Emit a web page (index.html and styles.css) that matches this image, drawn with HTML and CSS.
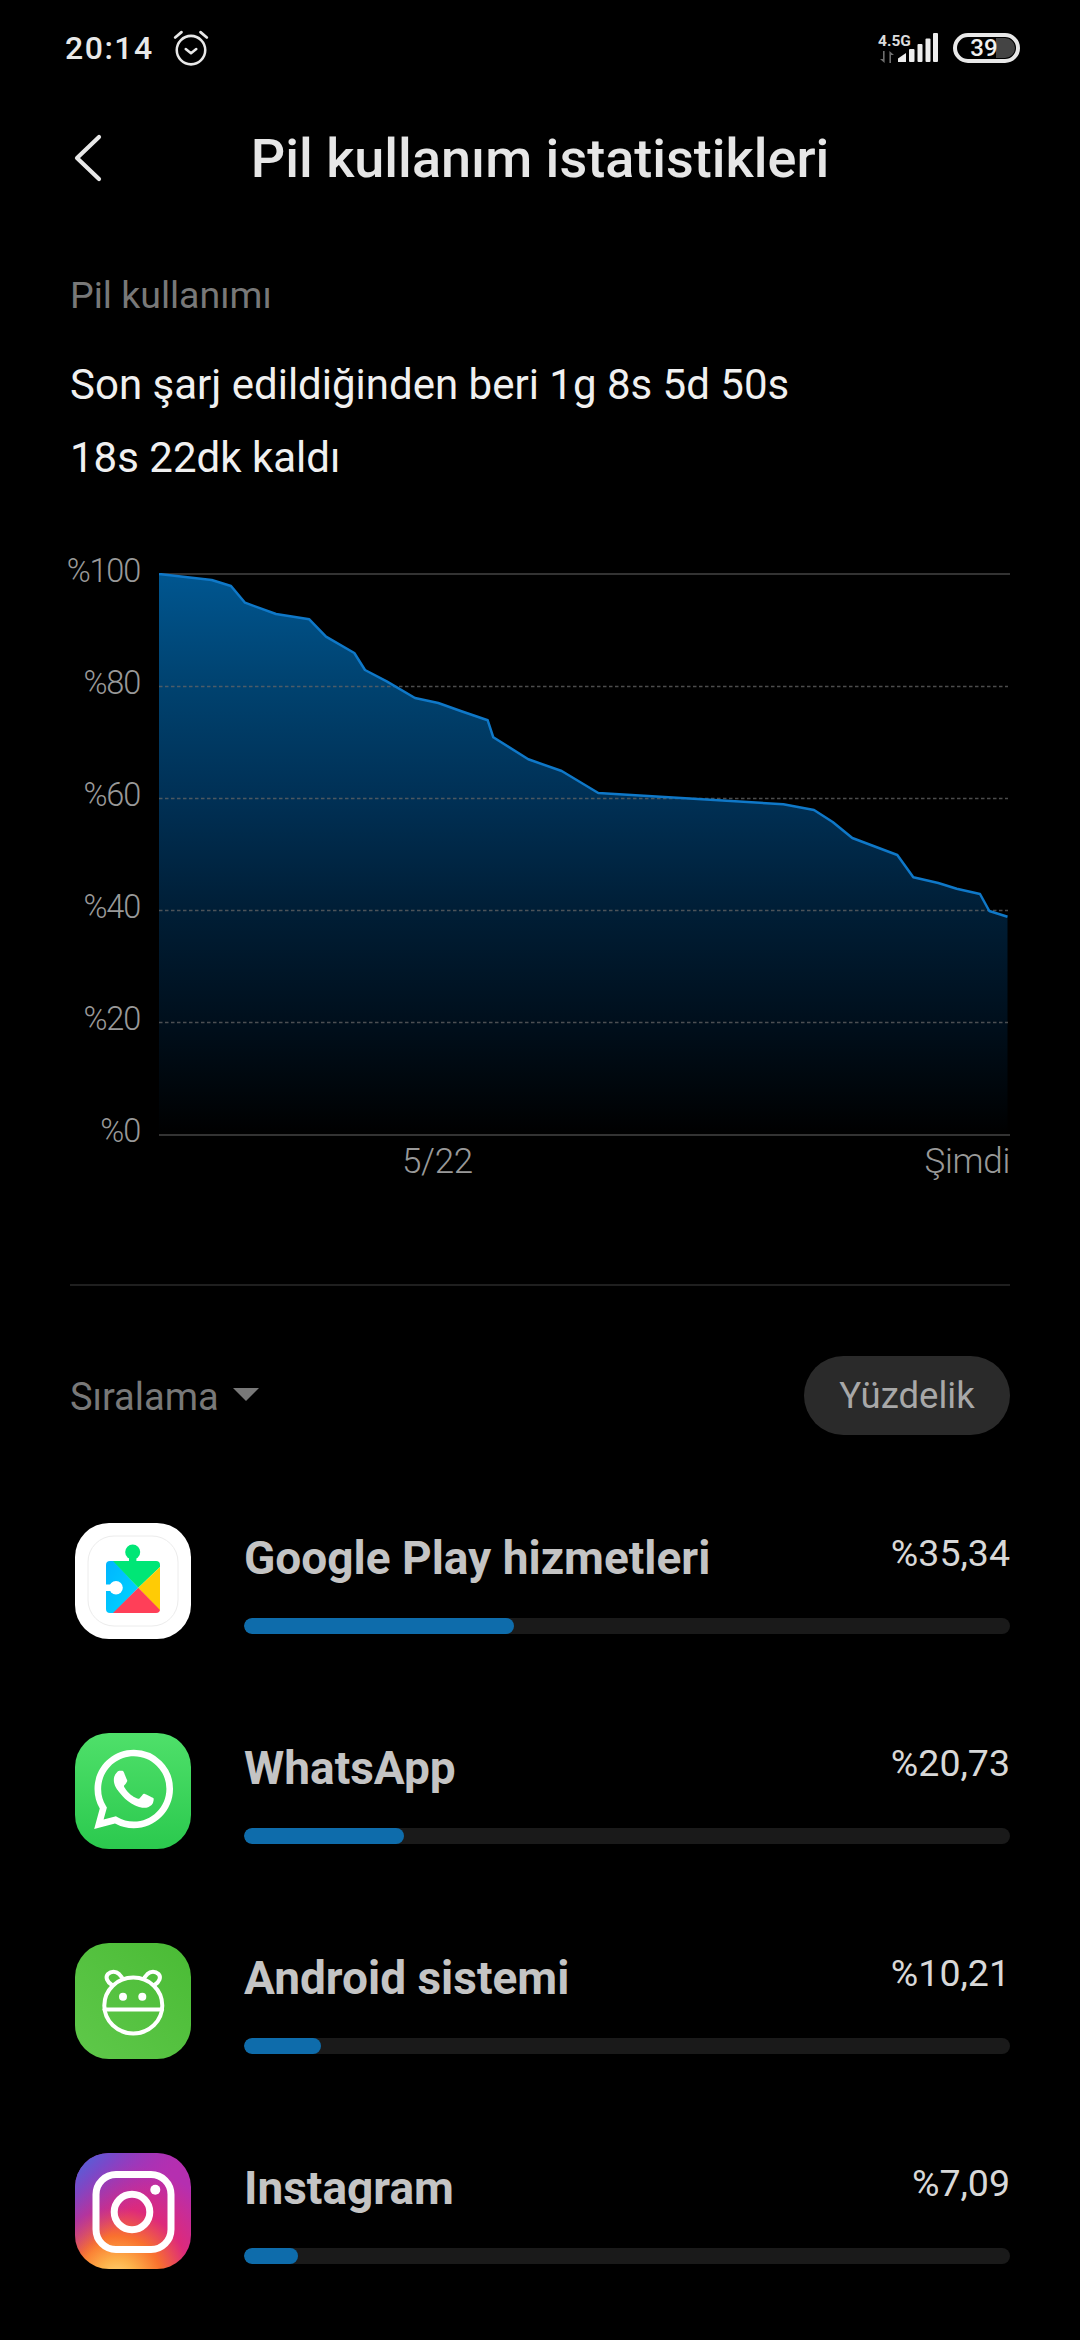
FILE: index.html
```html
<!DOCTYPE html>
<html lang="tr">
<head>
<meta charset="utf-8">
<title>Pil kullanım istatistikleri</title>
<link rel="stylesheet" href="styles.css">
</head>
<body>
<div class="page">
  <div class="statusbar">
    <div class="status-left">
      <span class="time">20:14</span>
      <svg class="alarm" viewBox="0 0 36 36" width="36" height="36" fill="none" stroke="#e8e8e8" stroke-linecap="round" stroke-linejoin="round">
        <circle cx="18" cy="20" r="13.500" stroke-width="2.400"/>
        <path d="M13 19l5 4 5-4" stroke-width="2.400"/>
        <path d="M3 8l6-5M33 8l-6-5" stroke-width="2.600"/>
      </svg>
    </div>
    <div class="status-right">
      <div class="net">
        <span class="net-type">4.5G</span>
        <svg class="net-arrows" viewBox="0 0 14 12" width="14" height="12" fill="#6e6e6e"><path d="M0 8h3V0h1.600v12zM14 4h-3v8H9.400V0z"/></svg>
      </div>
      <svg class="signal" viewBox="0 0 40 30" width="40" height="30" fill="#ececec">
        <path d="M0 29v-3.500l8-5.500v9z"/>
        <rect x="11" y="16" width="5.500" height="13" rx="1"/>
        <rect x="19.500" y="11" width="5" height="18" rx="1"/>
        <rect x="27.500" y="5.500" width="5" height="23.500" rx="1"/>
        <rect x="35" y="0" width="5" height="29" rx="1"/>
      </svg>
      <div class="battery"><span class="battery-level"></span><span class="battery-text">39</span></div>
    </div>
  </div>

  <header class="topbar">
    <svg class="back" viewBox="0 0 30 48" width="30" height="48" fill="none" stroke="#e8e8e8" stroke-width="4.200" stroke-linecap="round" stroke-linejoin="round"><path d="M26 3L4 24l22 21"/></svg>
    <h1 class="title">Pil kullanım istatistikleri</h1>
    <span></span>
  </header>

  <main class="content">
    <div class="section-label">Pil kullanımı</div>
    <div class="summary">
      <div>Son şarj edildiğinden beri 1g 8s 5d 50s</div>
      <div>18s 22dk kaldı</div>
    </div>

    <section class="chart">
      <div class="y-labels">
        <span>%100</span><span>%80</span><span>%60</span><span>%40</span><span>%20</span><span>%0</span>
      </div>
      <div class="plot">
        <svg class="plot-svg" viewBox="159 573 851 563" width="851" height="563">
          <defs>
            <linearGradient id="area" x1="0" y1="574" x2="0" y2="1135" gradientUnits="userSpaceOnUse">
              <stop offset="0" stop-color="#005690"/>
              <stop offset="0.2" stop-color="#00426f"/>
              <stop offset="0.4" stop-color="#003055"/>
              <stop offset="0.6" stop-color="#001e36"/>
              <stop offset="0.8" stop-color="#000f1c"/>
              <stop offset="1" stop-color="#000"/>
            </linearGradient>
          </defs>
          <path fill="url(#area)" d="M159 574L211.700 580 231 586 245 602.700 276 614 309.300 619.300 326 636.700 354.300 653 365 670 386.700 681.300 415 698 438.300 703 460 710.700 487.700 720.300 493.300 737.300 528.300 759.300 561.700 771 598.300 793 783.300 804.300 814 810 832.700 822 852.300 838 897.300 855 913.300 877.300 938.300 883 956.700 888.700 980 894 989.300 911 1007.500 916.700V1135H159z"/>
          <path class="grid-solid" d="M159 574H1010M159 1135H1010"/>
          <path class="grid-dash" d="M159 686.500H1008M159 798.500H1008M159 910.500H1008M159 1022.500H1008"/>
          <path class="curve" d="M159 574L211.700 580 231 586 245 602.700 276 614 309.300 619.300 326 636.700 354.300 653 365 670 386.700 681.300 415 698 438.300 703 460 710.700 487.700 720.300 493.300 737.300 528.300 759.300 561.700 771 598.300 793 783.300 804.300 814 810 832.700 822 852.300 838 897.300 855 913.300 877.300 938.300 883 956.700 888.700 980 894 989.300 911 1007.500 916.700"/>
        </svg>
        <div class="x-labels"><span>5/22</span><span>Şimdi</span></div>
      </div>
    </section>

    <hr class="divider">

    <div class="sort-row">
      <div class="sort-label">Sıralama<span class="caret"></span></div>
      <div class="pill">Yüzdelik</div>
    </div>

    <ul class="apps">
      <li class="app">
        <svg class="icon" viewBox="0 0 116 116" width="116" height="116">
          <rect width="116" height="116" rx="34" fill="#fff"/>
          <rect x="13" y="13" width="90" height="90" rx="26" fill="none" stroke="#ececec" stroke-width="1"/>
          <defs>
            <clipPath id="puzzle"><rect x="31" y="38" width="54" height="52" rx="4"/></clipPath>
            <linearGradient id="pblue" x1="0" y1="0" x2="1" y2="1"><stop offset="0" stop-color="#00b4ff"/><stop offset="1" stop-color="#00d8ff"/></linearGradient>
          </defs>
          <circle cx="57.700" cy="29" r="7.500" fill="#00e676"/>
          <rect x="54" y="30" width="7.400" height="10" fill="#00e676"/>
          <g clip-path="url(#puzzle)">
            <path fill="url(#pblue)" d="M31 38h8L63.300 64.700 39 90h-8z"/>
            <path fill="#00e676" d="M38 38h47v6L63.300 64.700z"/>
            <path fill="#ffcb05" d="M85 44v44L63.300 64.700z"/>
            <path fill="#ff3f58" d="M85 87v3H38L63.300 64.700z"/>
          </g>
          <rect x="30" y="61.500" width="8" height="6.500" fill="#fff"/>
          <circle cx="41" cy="64.700" r="6.800" fill="#fff"/>
        </svg>
        <div class="app-body">
          <div class="app-head"><span class="app-name">Google Play hizmetleri</span><span class="app-pct">%35,34</span></div>
          <div class="bar"><div class="bar-fill" style="width:35.3%"></div></div>
        </div>
      </li>
      <li class="app">
        <svg class="icon" viewBox="0 0 116 116" width="116" height="116">
          <defs><linearGradient id="wa" x1="0" y1="0" x2="0" y2="1"><stop offset="0" stop-color="#4fe06a"/><stop offset="1" stop-color="#2bc94e"/></linearGradient></defs>
          <rect width="116" height="116" rx="34" fill="url(#wa)"/>
          <g transform="translate(19 16.700) scale(3.300)"><path fill="#fff" d="M17.472 14.382c-.297-.149-1.758-.867-2.03-.967-.273-.099-.471-.148-.67.15-.197.297-.767.966-.94 1.164-.173.199-.347.223-.644.075-.297-.15-1.255-.463-2.39-1.475-.883-.788-1.48-1.761-1.653-2.059-.173-.297-.018-.458.13-.606.134-.133.298-.347.446-.52.149-.174.198-.298.298-.497.099-.198.05-.371-.025-.52-.075-.149-.669-1.612-.916-2.207-.242-.579-.487-.5-.669-.51-.173-.008-.371-.01-.57-.01-.198 0-.52.074-.792.372-.272.297-1.04 1.016-1.04 2.479 0 1.462 1.065 2.875 1.213 3.074.149.198 2.096 3.2 5.077 4.487.709.306 1.262.489 1.694.625.712.227 1.36.195 1.871.118.571-.085 1.758-.719 2.006-1.413.248-.694.248-1.289.173-1.413-.074-.124-.272-.198-.57-.347m-5.421 7.403h-.004a9.87 9.87 0 01-5.031-1.378l-.361-.214-3.741.982.998-3.648-.235-.374a9.86 9.86 0 01-1.51-5.26c.001-5.45 4.436-9.884 9.888-9.884 2.64 0 5.122 1.03 6.988 2.898a9.825 9.825 0 012.893 6.994c-.003 5.45-4.437 9.884-9.885 9.884m8.413-18.297A11.815 11.815 0 0012.05 0C5.495 0 .16 5.335.157 11.892c0 2.096.547 4.142 1.588 5.945L.057 24l6.305-1.654a11.882 11.882 0 005.683 1.448h.005c6.554 0 11.89-5.335 11.893-11.893a11.821 11.821 0 00-3.48-8.413z"/></g>
        </svg>
        <div class="app-body">
          <div class="app-head"><span class="app-name">WhatsApp</span><span class="app-pct">%20,73</span></div>
          <div class="bar"><div class="bar-fill" style="width:20.9%"></div></div>
        </div>
      </li>
      <li class="app">
        <svg class="icon" viewBox="0 0 116 116" width="116" height="116">
          <defs><linearGradient id="an" x1="0" y1="1" x2="1" y2="0"><stop offset="0" stop-color="#5fc84a"/><stop offset="1" stop-color="#4abb35"/></linearGradient></defs>
          <rect width="116" height="116" rx="34" fill="url(#an)"/>
          <g fill="none" stroke="#fff" stroke-width="4" stroke-linecap="round" stroke-linejoin="round">
            <ellipse cx="58.300" cy="62.500" rx="29" ry="28"/>
            <path d="M29.500 66.500H87"/>
            <path d="M37 42c-5-3-7-8-4-11 3-3 8-3 11 0l3 3.500M79.500 42c5-3 7-8 4-11-3-3-8-3-11 0l-3 3.500"/>
          </g>
          <circle cx="48" cy="53.700" r="4" fill="#fff"/>
          <circle cx="67.300" cy="53.700" r="4" fill="#fff"/>
        </svg>
        <div class="app-body">
          <div class="app-head"><span class="app-name">Android sistemi</span><span class="app-pct">%10,21</span></div>
          <div class="bar"><div class="bar-fill" style="width:10%"></div></div>
        </div>
      </li>
      <li class="app">
        <svg class="icon" viewBox="0 0 116 116" width="116" height="116">
          <defs>
            <radialGradient id="ig1" gradientUnits="userSpaceOnUse" cx="42" cy="128" r="118">
              <stop offset="0" stop-color="#ffdd80"/>
              <stop offset="0.18" stop-color="#fdb14a"/>
              <stop offset="0.38" stop-color="#f9712e"/>
              <stop offset="0.62" stop-color="#dd2a7b"/>
              <stop offset="1" stop-color="#b52fb0"/>
            </radialGradient>
            <linearGradient id="ig2" x1="0" y1="0" x2="0.5" y2="0.5">
              <stop offset="0" stop-color="#3f6fe0"/>
              <stop offset="0.35" stop-color="#6a4fd0" stop-opacity="0.8"/>
              <stop offset="1" stop-color="#a52fb5" stop-opacity="0"/>
            </linearGradient>
          </defs>
          <rect width="116" height="116" rx="34" fill="url(#ig1)"/>
          <rect width="116" height="116" rx="34" fill="url(#ig2)"/>
          <rect x="21" y="21.500" width="75" height="75" rx="20" fill="none" stroke="#fff" stroke-width="7"/>
          <circle cx="57" cy="59" r="17.800" fill="none" stroke="#fff" stroke-width="7"/>
          <circle cx="80.300" cy="36.700" r="5" fill="#fff"/>
        </svg>
        <div class="app-body">
          <div class="app-head"><span class="app-name">Instagram</span><span class="app-pct">%7,09</span></div>
          <div class="bar"><div class="bar-fill" style="width:7%"></div></div>
        </div>
      </li>
    </ul>
  </main>
</div>
</body>
</html>
```
FILE: styles.css
```css
* { box-sizing: border-box; }
html, body { margin: 0; padding: 0; background: #000; }
.page {
  width: 1080px;
  height: 2340px;
  overflow: hidden;
  background: #000;
  color: #e8e8e8;
  font-family: Roboto, "Noto Sans", sans-serif;
}

.statusbar {
  height: 96px;
  display: flex;
  align-items: center;
  justify-content: space-between;
  padding: 0 60px 0 65px;
}
.status-left { display: flex; align-items: center; gap: 18px; }
.time { font-size: 32px; font-weight: 500; letter-spacing: 1.500px; color: #e8e8e8; }
.alarm { width: 38px; height: 38px; margin-top: -1px; }
.status-right { display: flex; align-items: flex-end; height: 30px; }
.net { display: flex; flex-direction: column; align-items: flex-start; width: 40px; margin-right: -20px; }
.net-type { font-size: 15.500px; line-height: 17px; font-weight: 700; color: #dcdcdc; white-space: nowrap; }
.net-arrows { margin-top: 1px; margin-left: 2px; }
.signal { margin-right: 15px; }
.battery {
  position: relative;
  width: 67px;
  height: 30px;
  border: 4px solid #e8e8e8;
  border-radius: 15px;
  display: flex;
  align-items: center;
  justify-content: center;
  overflow: hidden;
  padding-right: 5px;
}
.battery-level { position: absolute; right: 1px; top: 1px; bottom: 1px; width: 19px; background: #444; border-radius: 0 10px 10px 0; }
.battery-text { position: relative; font-size: 24px; line-height: 22px; font-weight: 500; color: #f0f0f0; }

.topbar {
  height: 124px;
  display: grid;
  grid-template-columns: 1fr auto 1fr;
  align-items: center;
  padding: 0 73px;
}
.title { margin: 0; font-size: 54px; font-weight: 500; color: #e6e6e6; white-space: nowrap; }
.back { display: block; }

.content { padding: 0 70px; }
.section-label { margin-top: 50px; font-size: 37.500px; line-height: 50px; color: #787878; }
.summary { margin-top: 28px; font-size: 42px; line-height: 73px; color: #f0f0f0; }

.chart { margin-top: 57px; display: flex; gap: 19px; }
.y-labels {
  width: 70px;
  height: 600px;
  display: flex;
  flex-direction: column;
  justify-content: space-between;
  align-items: flex-end;
  font-size: 32.500px;
  font-weight: 300;
  line-height: 40px;
  color: #999;
  letter-spacing: -1.200px;
}
.plot { width: 851px; padding-top: 22px; }
.plot-svg { display: block; }
.grid-solid { stroke: #333; stroke-width: 2; fill: none; }
.grid-dash { stroke: #666; stroke-width: 1.500; stroke-dasharray: 3.500 2.500; fill: none; opacity: .75; }
.curve { stroke: #0f78c8; stroke-width: 2.500; fill: none; stroke-linejoin: round; }
.x-labels {
  margin-top: 6px;
  padding-left: 243px;
  display: flex;
  justify-content: space-between;
  font-size: 35px;
  font-weight: 300;
  line-height: 40px;
  color: #999;
  letter-spacing: -.3px;
}

.divider { margin: 102px 0 0; border: 0; border-top: 2px solid #1f1f1f; }

.sort-row { margin-top: 70px; display: flex; align-items: center; justify-content: space-between; }
.sort-label { display: flex; align-items: center; font-size: 38px; color: #787878; padding-top: 2px; }
.caret {
  margin-left: 14px;
  width: 0;
  height: 0;
  border-left: 13px solid transparent;
  border-right: 13px solid transparent;
  border-top: 13px solid #787878;
  margin-top: -4px;
}
.pill {
  width: 206px;
  height: 79px;
  border-radius: 40px;
  background: #2a2a2a;
  color: #a8a8a8;
  font-size: 36.500px;
  display: flex;
  align-items: center;
  justify-content: center;
}

.apps { list-style: none; margin: 88px 0 0; padding: 0 0 0 5px; display: flex; flex-direction: column; gap: 94px; }
.app { display: flex; gap: 53px; height: 116px; }
.icon { display: block; flex: none; }
.app-body { flex: 1; }
.app-head { height: 95px; display: flex; justify-content: space-between; align-items: flex-start; }
.app-name { font-size: 46px; font-weight: 700; line-height: 71px; color: #c4c4c4; }
.app-pct { font-size: 37.500px; line-height: 61px; color: #d8d8d8; }
.bar { height: 16px; border-radius: 8px; background: #1a1a1a; overflow: hidden; }
.bar-fill { height: 100%; background: #0e6cab; border-radius: 8px; }
```
